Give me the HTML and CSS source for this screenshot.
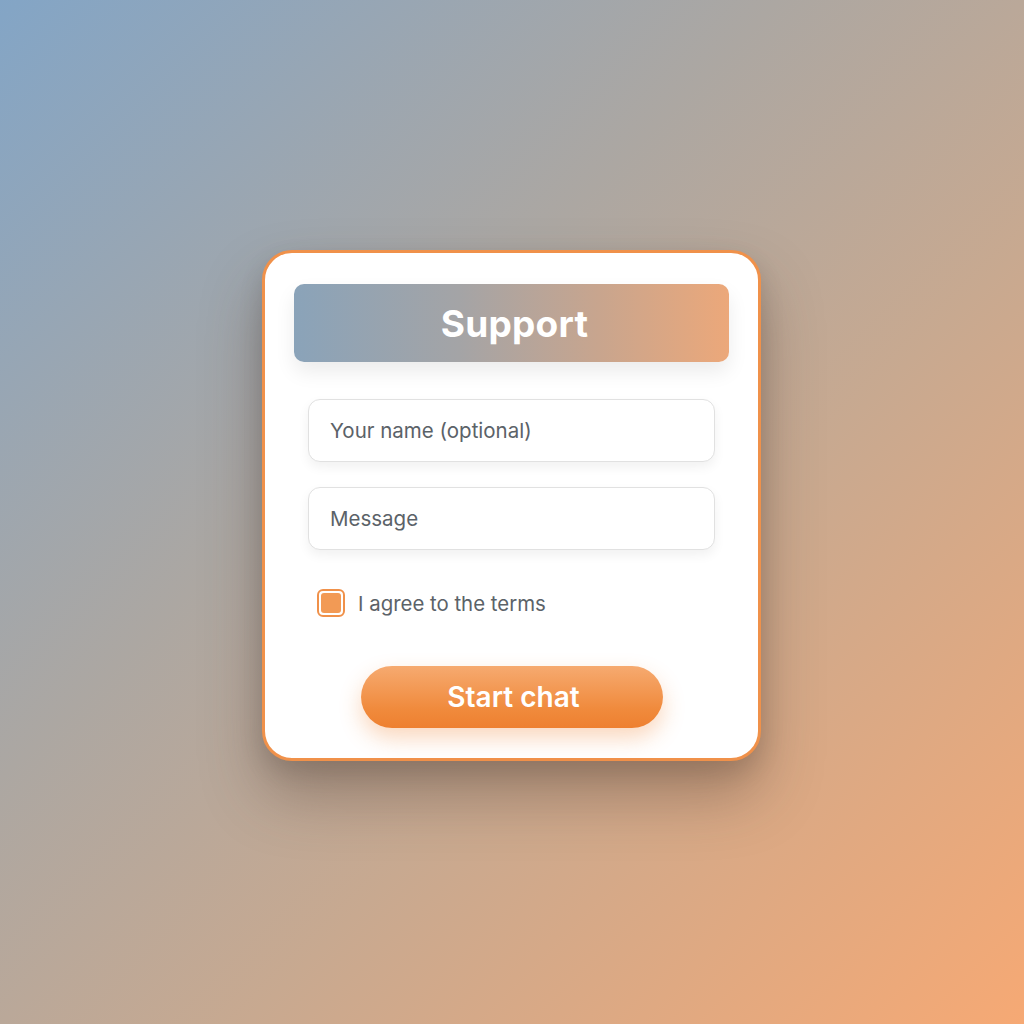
FILE: index.html
```html
<!DOCTYPE html>
<html>
<head>
<meta charset="utf-8">
<link rel="stylesheet" href="styles.css">
</head>
<body>
<div class="page">
  <div class="card">
    <div class="header"><h1 class="title">Support</h1></div>
    <div class="fields">
      <div class="input">Your name (optional)</div>
      <div class="input">Message</div>
    </div>
    <label class="agree">
      <span class="checkbox"><span class="check-fill"></span></span>
      <span class="agree-text">I agree to the terms</span>
    </label>
    <div class="actions">
      <button class="btn">Start chat</button>
    </div>
  </div>
</div>
</body>
</html>
```
FILE: styles.css
```css
* { box-sizing: border-box; }
html, body { margin: 0; padding: 0; }
body {
  width: 1024px;
  height: 1024px;
  font-family: Inter, "Noto Sans", sans-serif;
  background: linear-gradient(135deg, #83a5c6 0%, #aca7a2 38%, #c8a990 62%, #f6a974 100%);
}
.page {
  width: 1024px;
  height: 1024px;
  display: flex;
  align-items: center;
  justify-content: center;
  padding-bottom: 13px;
  padding-right: 1px;
}
.card {
  width: 499px;
  height: 511px;
  background: #fff;
  border: 3px solid #f0914a;
  border-radius: 30px;
  padding: 31px 29px 31px;
  box-shadow: 0 34px 60px rgba(70, 50, 40, 0.35), 0 10px 24px rgba(0,0,0,0.12);
  display: flex;
  flex-direction: column;
}
.header {
  height: 78px;
  flex-shrink: 0;
  border-radius: 10px;
  background: linear-gradient(90deg, #8aa3b9 0%, #a4a4a6 38%, #c8a58e 70%, #eca87a 100%);
  display: flex;
  align-items: center;
  justify-content: center;
  padding-left: 6px;
  box-shadow: 0 10px 20px rgba(0,0,0,0.08);
}
.title {
  margin: 0;
  color: #fff;
  font-size: 37px;
  font-weight: 700;
  letter-spacing: 0.2px;
}
.fields {
  margin: 37px 14px 0;
  display: flex;
  flex-direction: column;
  gap: 25px;
}
.input {
  height: 63px;
  border: 1.5px solid #e1e1e1;
  border-radius: 12px;
  background: #fff;
  box-shadow: 0 5px 12px rgba(0,0,0,0.06);
  display: flex;
  align-items: center;
  padding-left: 21px;
  font-size: 20.5px;
  color: #5b6268;
}
.agree {
  margin: 39px 0 0 23px;
  display: flex;
  align-items: center;
  gap: 13px;
}
.checkbox {
  width: 28px;
  height: 28px;
  border: 2.5px solid #f0914a;
  border-radius: 6px;
  padding: 2px;
  background: #fff;
  display: block;
}
.check-fill {
  display: block;
  width: 100%;
  height: 100%;
  border-radius: 3px;
  background: #f29a55;
}
.agree-text {
  font-size: 20.4px;
  color: #5b6268;
}
.actions {
  margin-top: 49px;
  display: flex;
  justify-content: center;
}
.btn {
  width: 302px;
  height: 62px;
  border: none;
  border-radius: 31px;
  background: linear-gradient(180deg, #f6aa70 0%, #f08a3c 70%, #ee8030 100%);
  color: #fff;
  font-family: Inter, "Noto Sans", sans-serif;
  font-size: 28px;
  font-weight: 600;
  box-shadow: 0 10px 22px rgba(240, 130, 50, 0.32);
  padding: 0 0 0 4px;
}
```
